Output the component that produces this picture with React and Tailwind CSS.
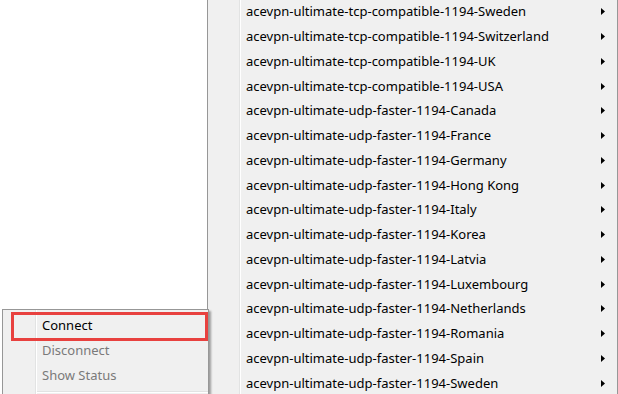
const SERVERS = [
  'acevpn-ultimate-tcp-compatible-1194-Sweden',
  'acevpn-ultimate-tcp-compatible-1194-Switzerland',
  'acevpn-ultimate-tcp-compatible-1194-UK',
  'acevpn-ultimate-tcp-compatible-1194-USA',
  'acevpn-ultimate-udp-faster-1194-Canada',
  'acevpn-ultimate-udp-faster-1194-France',
  'acevpn-ultimate-udp-faster-1194-Germany',
  'acevpn-ultimate-udp-faster-1194-Hong Kong',
  'acevpn-ultimate-udp-faster-1194-Italy',
  'acevpn-ultimate-udp-faster-1194-Korea',
  'acevpn-ultimate-udp-faster-1194-Latvia',
  'acevpn-ultimate-udp-faster-1194-Luxembourg',
  'acevpn-ultimate-udp-faster-1194-Netherlands',
  'acevpn-ultimate-udp-faster-1194-Romania',
  'acevpn-ultimate-udp-faster-1194-Spain',
  'acevpn-ultimate-udp-faster-1194-Sweden',
];

function SubArrow() {
  return (
    <svg width="4" height="7" viewBox="0 0 4 7" className="shrink-0">
      <path d="M0 0 L4 3.5 L0 7 Z" fill="#000" />
    </svg>
  );
}

export default function App() {
  return (
    <div
      className="relative w-[618px] h-[394px] overflow-hidden bg-white flex text-[13px] leading-none"
      style={{ fontFamily: '"Noto Sans", "Liberation Sans", sans-serif' }}
    >
      {/* blank desktop area */}
      <div className="w-[207px] h-full shrink-0 bg-white" />

      {/* server submenu */}
      <div className="flex-1 h-full flex bg-[#f0f0f0] border-l border-r border-[#979797]">
        <div className="w-[32px] shrink-0 border-r border-[#e2e3e3]" />
        <div className="w-px shrink-0 bg-white" />
        <div className="flex-1 flex flex-col -mt-[0.5px]">
          {SERVERS.map((s) => (
            <div key={s} className="h-[24.75px] shrink-0 flex items-center justify-between pl-[5px] pr-[12px] text-black">
              <span>{s}</span>
              <SubArrow />
            </div>
          ))}
        </div>
      </div>

      {/* tray context menu */}
      <div className="absolute left-[2px] top-[309px] w-[207px] h-[100px] bg-[#f0f0f0] border border-[#979797] shadow-[2px_2px_2px_rgba(0,0,0,0.35)] flex">
        <div className="w-[33px] shrink-0 border-r border-[#e2e3e3]" />
        <div className="w-px shrink-0 bg-white" />
        <div className="flex-1 flex flex-col pt-[3.5px]">
          <div className="h-[24.75px] flex items-center pl-[5px] text-black">Connect</div>
          <div className="h-[24.75px] flex items-center pl-[5px] text-[#7a7a7a]">Disconnect</div>
          <div className="h-[24.75px] flex items-center pl-[5px] text-[#7a7a7a]">Show Status</div>
          <div className="mt-[3px] h-px bg-[#e2e3e3]" />
          <div className="h-px bg-white" />
        </div>
      </div>

      {/* highlight annotation */}
      <div className="absolute left-[11px] top-[312px] w-[197px] h-[29px] border-[3px] border-[#e8413f]" />
    </div>
  );
}
